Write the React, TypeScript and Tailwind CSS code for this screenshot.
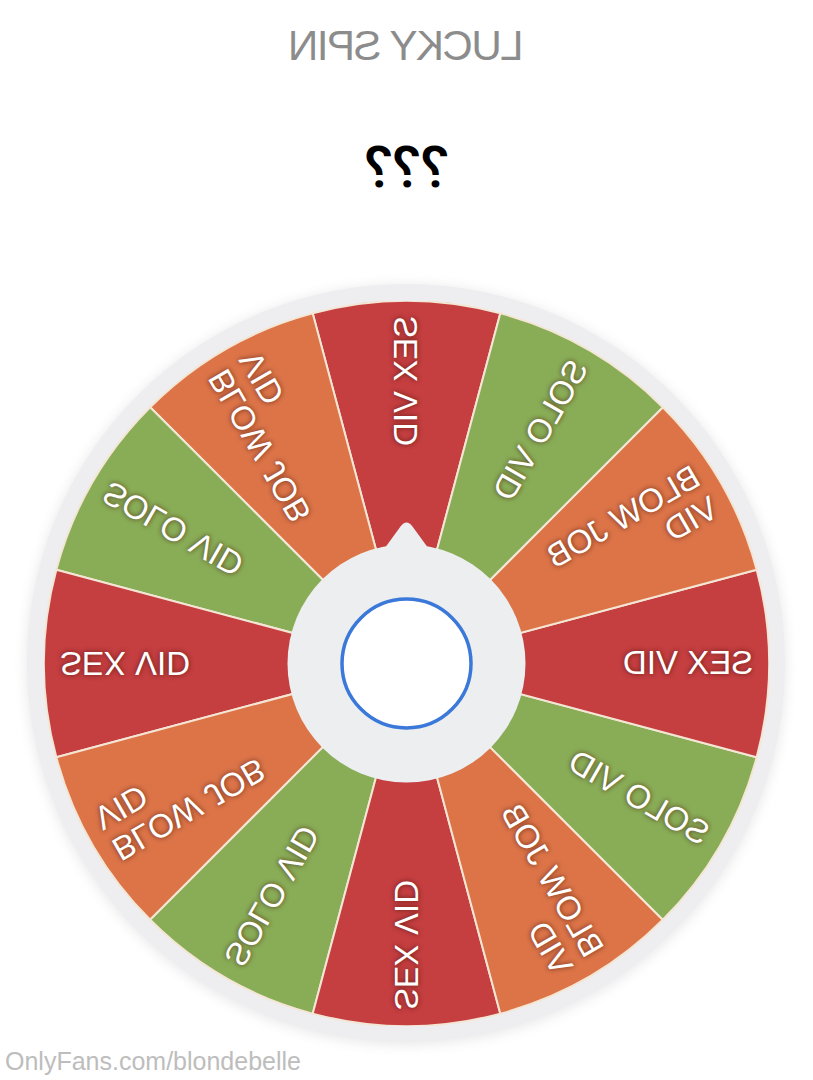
const R = 362.5;

type Slice = { label: string; color: string };

// clockwise from the top: red, orange, green, repeated four times
const base: Slice[] = [
  { label: 'SEX VID', color: '#c53e40' },
  { label: 'BLOW JOB\nVID', color: '#dc7448' },
  { label: 'SOLO VID', color: '#89ad57' },
];
const slices: Slice[] = [...base, ...base, ...base, ...base];

function arcPath(start: number, end: number) {
  const a = (start * Math.PI) / 180;
  const b = (end * Math.PI) / 180;
  const x1 = R * Math.cos(a);
  const y1 = R * Math.sin(a);
  const x2 = R * Math.cos(b);
  const y2 = R * Math.sin(b);
  return `M0 0 L${x1} ${y1} A${R} ${R} 0 0 1 ${x2} ${y2} Z`;
}

function Wheel() {
  return (
    <div className="relative mx-auto w-[758px] h-[758px] rounded-full bg-[#eeeef0] shadow-[0_2px_14px_rgba(0,0,0,0.10)]">
      <svg
        className="absolute left-[16.5px] top-[16.5px]"
        width={725}
        height={725}
        viewBox="-362.5 -362.5 725 725"
      >
        {slices.map((s, i) => {
          const mid = -90 + i * 30;
          return (
            <path
              key={i}
              d={arcPath(mid - 15, mid + 15)}
              fill={s.color}
              stroke="#f4e6d4"
              strokeWidth={2}
              strokeLinejoin="round"
            />
          );
        })}
        {/* hub with its pointer */}
        <path d="M0 -141 Q3 -141 6 -137 L22 -115 L-22 -115 L-6 -137 Q-3 -141 0 -141 Z" fill="#eceef0" />
        <circle r={119} fill="#eceef0" />
        <circle r={64.5} fill="#ffffff" stroke="#3a78d9" strokeWidth={3.5} />
      </svg>

      {slices.map((s, i) => (
        <div
          key={i}
          className="absolute left-1/2 top-1/2 w-[362px] h-0 origin-top-left"
          style={{ transform: `rotate(${-90 + i * 30}deg)` }}
        >
          <div className="absolute right-[15px] top-0 -translate-y-1/2 rotate-180 whitespace-pre text-left text-[33px] leading-[36px] text-white [text-shadow:0_0_5px_rgba(70,20,10,0.8)]">
            {s.label}
          </div>
        </div>
      ))}
    </div>
  );
}

export default function App() {
  return (
    <div className="relative w-[813px] h-[1080px] overflow-hidden bg-white font-['Liberation_Sans',Arial,sans-serif]">
      <div className="-scale-x-100 flex flex-col items-center">
        <h1 className="mt-[22px] text-[42px] leading-[48px] tracking-[-1.5px] text-[#8c8c8c]">LUCKY SPIN</h1>
        <div className="mt-[65px] font-['Roboto',sans-serif] text-[58px] leading-[64px] font-medium text-black">???</div>
        <div className="mt-[85px] w-full">
          <Wheel />
        </div>
      </div>
      <p className="absolute left-[5px] top-[1047px] text-[25px] leading-[28px] text-[#bdbdbd]">
        OnlyFans.com/blondebelle
      </p>
    </div>
  );
}
